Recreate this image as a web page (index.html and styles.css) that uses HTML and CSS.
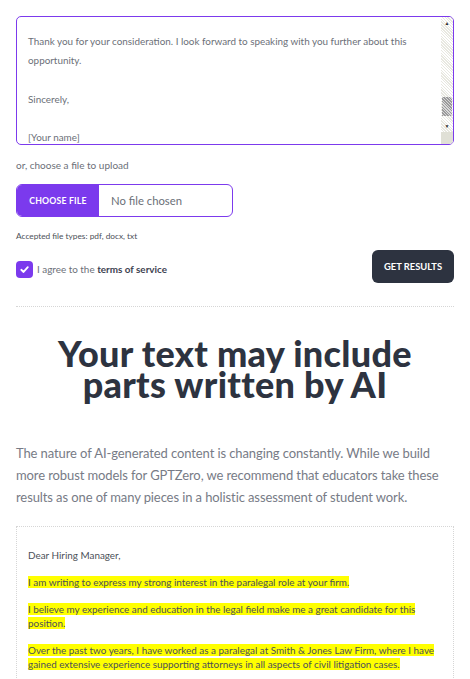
FILE: index.html
```html
<!DOCTYPE html>
<html>
<head>
<meta charset="utf-8">
<link rel="stylesheet" href="styles.css">
</head>
<body>
<div class="page">
  <div class="textarea">
    <div class="ta-content">
      <p>Thank you for your consideration. I look forward to speaking with you further about this opportunity.</p>
      <p>Sincerely,</p>
      <p>[Your name]</p>
    </div>
    <div class="scrollbar">
      <div class="sb-up">▲</div>
      <div class="sb-track"><div class="sb-thumb"></div></div>
      <div class="sb-down">▼</div>
      <div class="sb-corner"></div>
    </div>
  </div>

  <div class="upload-label">or, choose a file to upload</div>
  <div class="file-input">
    <div class="file-btn">CHOOSE FILE</div>
    <div class="file-name">No file chosen</div>
  </div>
  <div class="accepted">Accepted file types: pdf, docx, txt</div>

  <div class="agree-row">
    <label class="agree">
      <span class="checkbox">
        <svg width="11" height="11" viewBox="0 0 12 12"><path d="M2.5 6.3 L5 8.7 L9.6 3.4" fill="none" stroke="#fff" stroke-width="2" stroke-linecap="round" stroke-linejoin="round"/></svg>
      </span>
      <span class="agree-text">I agree to the <b>terms of service</b></span>
    </label>
    <div class="get-results">GET RESULTS</div>
  </div>

  <div class="divider"></div>

  <h1 class="headline">Your text may include<br>parts written by AI</h1>

  <p class="lead">The nature of AI-generated content is changing constantly. While we build more robust models for GPTZero, we recommend that educators take these results as one of many pieces in a holistic assessment of student work.</p>

  <div class="result">
    <p>Dear Hiring Manager,</p>
    <p><mark>I am writing to express my strong interest in the paralegal role at your firm.</mark></p>
    <p><mark>I believe my experience and education in the legal field make me a great candidate for this position.</mark></p>
    <p><mark>Over the past two years, I have worked as a paralegal at Smith &amp; Jones Law Firm, where I have gained extensive experience supporting attorneys in all aspects of civil litigation cases.</mark></p>
  </div>
</div>
</body>
</html>
```

FILE: styles.css
```css
* { box-sizing: border-box; }
html, body { margin: 0; padding: 0; background: #fff; }
body {
  font-family: "Lato", "Noto Sans", sans-serif;
  color: #4b5563;
  width: 470px;
  height: 679px;
  overflow: hidden;
}
.page { padding: 16px 16px 0 16px; }

.textarea {
  height: 129px;
  border: 1px solid #7c3aed;
  border-radius: 5px;
  display: flex;
  overflow: hidden;
}
.ta-content {
  flex: 1;
  padding: 0 10px 0 11px;
  font-size: 9.9px;
  line-height: 19.3px;
  color: #6b6f78;
}
.ta-content p { margin: 0 0 19.3px 0; }
.ta-content p:first-child { margin-top: 15px; }

.scrollbar {
  width: 12px;
  display: flex;
  flex-direction: column;
  background: repeating-linear-gradient(45deg, #e8e8e0 0 1px, #fff 1px 2px);
}
.sb-up, .sb-down {
  height: 12px;
  font-size: 5px;
  line-height: 12px;
  text-align: center;
  color: #333;
}
.sb-track { flex: 1; display: flex; flex-direction: column; justify-content: flex-end; }
.sb-thumb {
  height: 19px;
  margin: 0 1px 4px 1px;
  background: repeating-linear-gradient(45deg, #9a9a9a 0 1px, #d8d8d8 1px 2px);
}
.sb-corner { height: 12px; background: #e0e0d6; }

.upload-label {
  margin-top: 14px;
  font-size: 10px;
  color: #6b6f78;
}
.file-input {
  margin-top: 13px;
  width: 217px;
  height: 33px;
  border: 1px solid #7c3aed;
  border-radius: 6px;
  display: flex;
  overflow: hidden;
}
.file-btn {
  width: 82px;
  background: #7b3aed;
  color: #fff;
  font-size: 8.7px;
  font-weight: 700;
  display: flex;
  align-items: center;
  justify-content: center;
  letter-spacing: 0.2px;
}
.file-name {
  display: flex;
  align-items: center;
  padding-left: 12px;
  font-size: 11.3px;
  color: #6b6f78;
}
.accepted {
  margin-top: 14px;
  font-size: 8.3px;
  color: #4b5058;
}
.agree-row {
  margin-top: 9px;
  display: flex;
  justify-content: space-between;
  align-items: center;
}
.agree { display: flex; align-items: center; gap: 4px; margin-top: 5px; }
.checkbox {
  width: 17px;
  height: 17px;
  border-radius: 4px;
  background: #7b3aed;
  display: flex;
  align-items: center;
  justify-content: center;
}
.agree-text { font-size: 9.9px; color: #6b6f78; }
.agree-text b { color: #3d4250; font-weight: 700; }
.get-results {
  width: 82px;
  height: 33px;
  border-radius: 6px;
  background: #2d3340;
  color: #fff;
  font-size: 9.4px;
  font-weight: 700;
  display: flex;
  align-items: center;
  justify-content: center;
}
.divider {
  margin-top: 23px;
  border-top: 1px dotted #d6d6d6;
}
.headline {
  margin: 31px 0 0 0;
  text-align: center;
  font-size: 36px;
  line-height: 31px;
  font-weight: 900;
  color: #2d3340;
  letter-spacing: 0.3px;
}
.lead {
  margin: 42px 0 0 0;
  font-size: 13px;
  line-height: 22px;
  color: #777b86;
  letter-spacing: -0.1px;
}
.result {
  margin-top: 18px;
  border: 1px dotted #d6d6d6;
  border-bottom: none;
  padding: 21px 11px 0 11px;
  font-size: 9.9px;
  line-height: 14px;
  color: #4b5058;
  height: 200px;
}
.result p { margin: 0 0 13px 0; }
.result mark { background: #ffff00; color: #4b5058; }
```
